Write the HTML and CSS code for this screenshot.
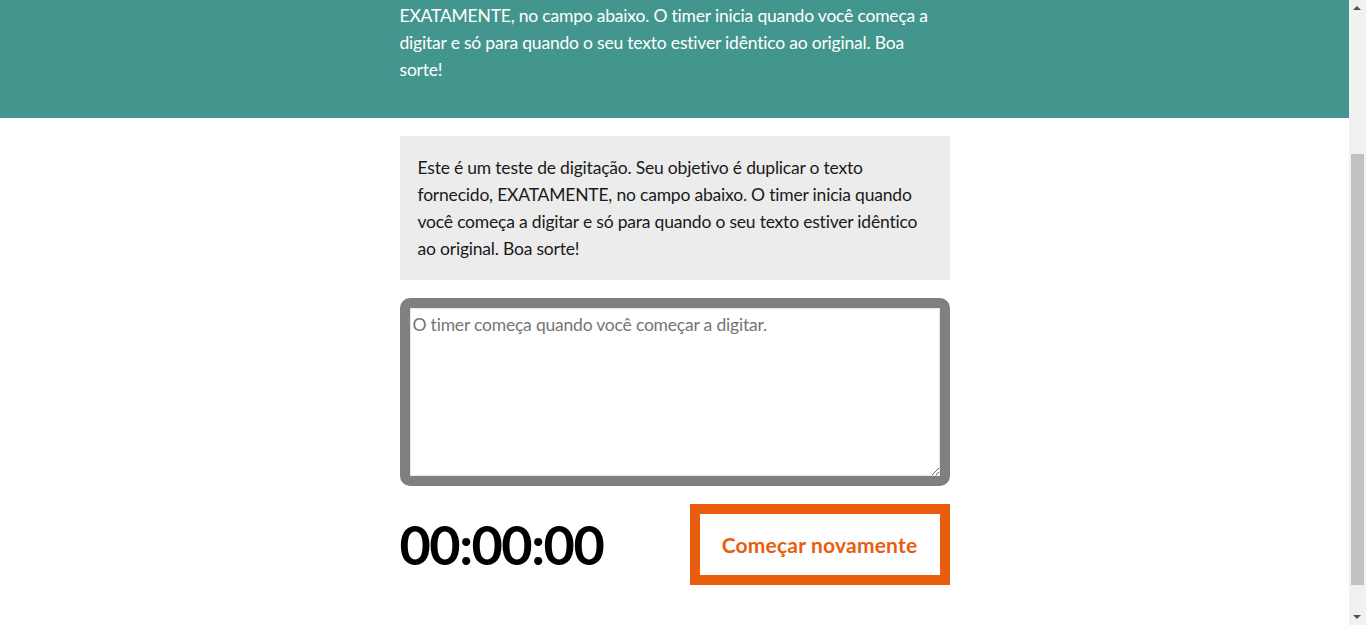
FILE: index.html
```html
<!DOCTYPE html>
<html lang="pt-BR">
<head>
<meta charset="utf-8">
<title>Teste de digitação</title>
<link rel="stylesheet" href="styles.css">
</head>
<body>
<div class="page">
  <header class="masthead">
    <div class="container">
      <p class="intro">EXATAMENTE, no campo abaixo. O timer inicia quando você começa a digitar e só para quando o seu texto estiver idêntico ao original. Boa sorte!</p>
    </div>
  </header>
  <main class="container main">
    <section class="origin-text">
      <p>Este é um teste de digitação. Seu objetivo é duplicar o texto fornecido, EXATAMENTE, no campo abaixo. O timer inicia quando você começa a digitar e só para quando o seu texto estiver idêntico ao original. Boa sorte!</p>
    </section>
    <section class="test-wrapper">
      <textarea class="test-area" rows="6" placeholder="O timer começa quando você começar a digitar."></textarea>
    </section>
    <div class="meta">
      <div class="timer">00:00:00</div>
      <button class="reset" type="button">Começar novamente</button>
    </div>
  </main>
</div>
<div class="scrollbar" aria-hidden="true">
  <div class="arrow up"></div>
  <div class="track"><div class="thumb"></div></div>
  <div class="arrow down"></div>
</div>
</body>
</html>
```
FILE: styles.css
```css
html, body {
  margin: 0;
  padding: 0;
  height: 100%;
  overflow: hidden;
}
body {
  font-family: "Lato", "Noto Sans", sans-serif;
  font-size: 17.5px;
  letter-spacing: -0.2px;
  line-height: 27px;
  color: #1a1a1a;
  background: #fff;
}
.page {
  width: 1349px;
}
.container {
  width: 550px;
  margin: 0 auto;
}
.masthead {
  background: #43968e;
  color: #fff;
  height: 118px;
}
.intro {
  margin: 0;
  padding-top: 2px;
}
.main {
  padding-top: 18px;
  display: flex;
  flex-direction: column;
  gap: 18px;
}
.origin-text {
  background: #ececec;
  padding: 18px;
}
.origin-text p {
  margin: 0;
}
.test-wrapper {
  display: flex;
}
.test-area {
  box-sizing: border-box;
  width: 550px;
  height: 188px;
  border: 10px solid #808080;
  border-radius: 10px;
  padding: 3px 3px;
  margin: 0;
  font-family: inherit;
  font-size: 17.5px;
  letter-spacing: -0.2px;
  line-height: 27px;
  color: #333;
  background: #fff;
  box-shadow: inset 0 0 0 1px #e6e6e6;
}
.test-area::placeholder {
  color: #757575;
}
.meta {
  display: flex;
  justify-content: space-between;
  align-items: center;
}
.timer {
  font-size: 54px;
  font-weight: 700;
  line-height: 60px;
  color: #000;
  letter-spacing: -1.5px;
}
.reset {
  box-sizing: border-box;
  width: 260px;
  height: 81px;
  border: 10px solid #e95d0f;
  background: #fff;
  color: #e95d0f;
  font-family: inherit;
  font-size: 21px;
  letter-spacing: 0.2px;
  font-weight: 700;
  padding: 0;
}
.scrollbar {
  position: fixed;
  top: 0;
  right: 0;
  width: 17px;
  height: 625px;
  background: #f1f1f1;
  display: flex;
  flex-direction: column;
}
.arrow {
  height: 17px;
  position: relative;
}
.arrow::after {
  content: "";
  position: absolute;
  left: 4px;
  width: 0;
  height: 0;
  border-left: 4px solid transparent;
  border-right: 4px solid transparent;
}
.arrow.up::after {
  top: 6px;
  border-bottom: 4px solid #505050;
}
.arrow.down::after {
  top: 7px;
  border-top: 4px solid #505050;
}
.track {
  flex: 1;
  position: relative;
}
.thumb {
  position: absolute;
  left: 2px;
  right: 2px;
  top: 137px;
  height: 431px;
  background: #c1c1c1;
}
```
